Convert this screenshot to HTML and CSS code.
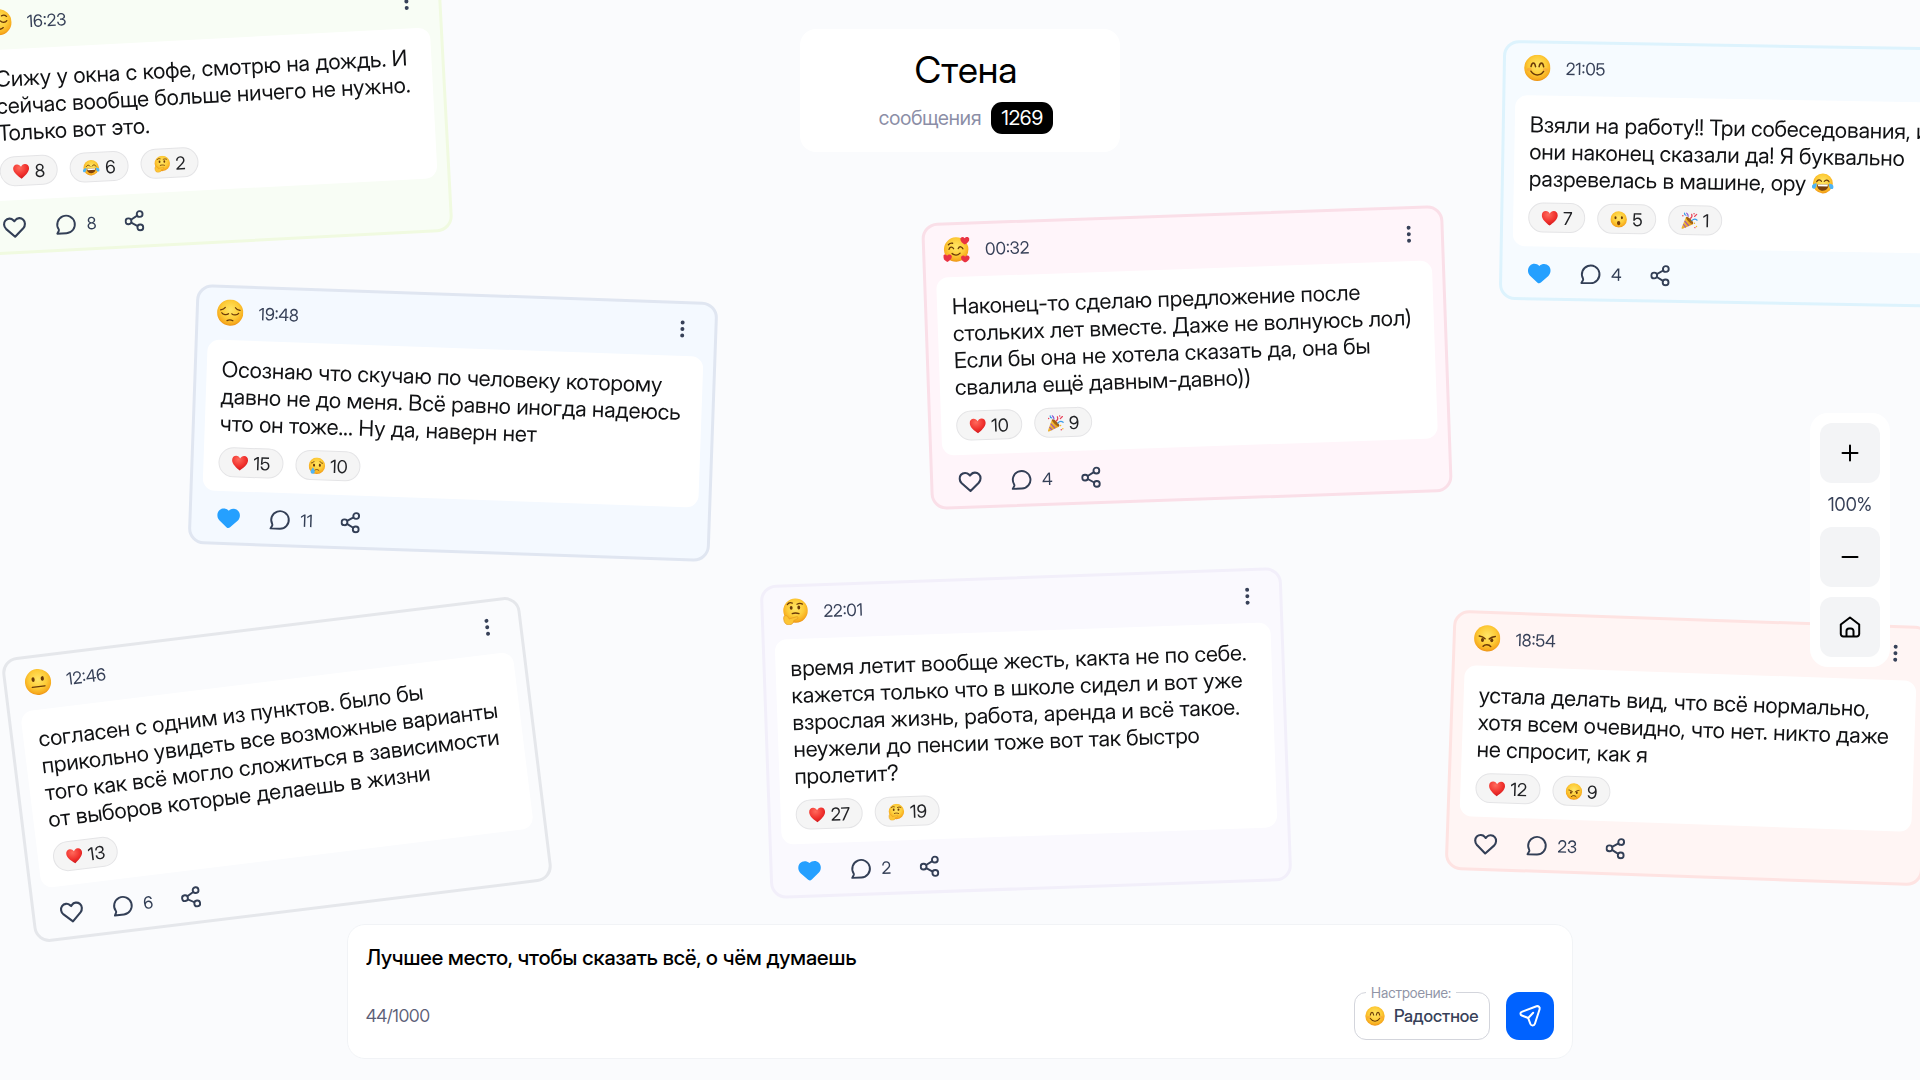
FILE: index.html
```html
<!DOCTYPE html>
<html lang="ru">
<head>
<meta charset="utf-8">
<meta name="viewport" content="width=device-width, initial-scale=1">
<title>Стена</title>
<link rel="stylesheet" href="styles.css">
</head>
<body>
<svg class="sprite" aria-hidden="true">
  <defs>
    <radialGradient id="g-face" cx="50%" cy="40%" r="62%">
      <stop offset="0" stop-color="#ffe566"/><stop offset=".55" stop-color="#fdcc38"/><stop offset=".85" stop-color="#f7ab1e"/><stop offset="1" stop-color="#e88a12"/>
    </radialGradient>
    <radialGradient id="g-heart" cx="40%" cy="25%" r="80%">
      <stop offset="0" stop-color="#ff6a5c"/><stop offset=".6" stop-color="#f0302c"/><stop offset="1" stop-color="#c8161c"/>
    </radialGradient>
    <linearGradient id="g-cone" x1="0" y1="0" x2="1" y2="1">
      <stop offset="0" stop-color="#ffd54a"/><stop offset="1" stop-color="#d98a16"/>
    </linearGradient>
  </defs>
  <symbol id="e-heart" viewBox="0 0 32 32">
    <path fill="url(#g-heart)" d="M16 30C10 25 1 18.500 1 10.500 1 5.500 4.500 2.500 8.500 2.500c3.300 0 6 1.800 7.500 5 1.500-3.200 4.200-5 7.500-5 4 0 7.500 3 7.500 8C31 18.500 22 25 16 30z"/>
  </symbol>
  <symbol id="e-smile" viewBox="0 0 32 32">
    <circle cx="16" cy="16" r="15.500" fill="url(#g-face)"/>
    <ellipse cx="6.500" cy="18" rx="3" ry="2" fill="#f58a3c" opacity=".4"/><ellipse cx="25.500" cy="18" rx="3" ry="2" fill="#f58a3c" opacity=".4"/>
    <g fill="none" stroke="#6b3a08" stroke-width="1.800" stroke-linecap="round"><path d="M8.500 14.500c.6-3 1.600-4.300 2.700-4.300s2.100 1.300 2.700 4.300M18.100 14.500c.6-3 1.600-4.300 2.700-4.300s2.100 1.300 2.700 4.300M8.500 20c2 3 4.500 4.300 7.500 4.300s5.500-1.300 7.500-4.300"/></g>
  </symbol>
  <symbol id="e-sad" viewBox="0 0 32 32">
    <circle cx="16" cy="16" r="15.500" fill="url(#g-face)"/>
    <g fill="none" stroke="#6b3a08" stroke-width="1.500" stroke-linecap="round"><path d="M6 16.500c1.500 2.300 6 2.800 8 .8M26 16.500c-1.500 2.300-6 2.800-8 .8M4.500 13c2-.3 4.500-1.500 5.500-3M27.500 13c-2-.3-4.500-1.500-5.500-3M12.500 25.500c2-1 5-1 7 0"/></g>
  </symbol>
  <symbol id="e-calm" viewBox="0 0 32 32">
    <circle cx="16" cy="16" r="15.500" fill="url(#g-face)"/>
    <g fill="none" stroke="#6b3a08" stroke-width="1.500" stroke-linecap="round"><path d="M6 14.500c1.500 2.300 6 2.300 7.500 0M18.500 14.500c1.500 2.300 6 2.300 7.500 0M6 9.500c1.500-1.500 4-2 6-1M20 8.500c2-1 4.500-.5 6 1M10.500 22.500c3 2.500 8 2.500 11 0"/></g>
  </symbol>
  <symbol id="e-neutral" viewBox="0 0 32 32">
    <circle cx="16" cy="16" r="15.500" fill="url(#g-face)"/>
    <ellipse cx="10.500" cy="12.500" rx="1.900" ry="2.800" fill="#6b3a08"/><ellipse cx="21.500" cy="12.500" rx="1.900" ry="2.800" fill="#6b3a08"/>
    <path d="M8.500 21.500h15" stroke="#6b3a08" stroke-width="1.600" stroke-linecap="round"/>
  </symbol>
  <symbol id="e-angry" viewBox="0 0 32 32">
    <circle cx="16" cy="16" r="15.500" fill="url(#g-face)"/>
    <ellipse cx="10.500" cy="18" rx="1.800" ry="2.300" fill="#6b3a08"/><ellipse cx="21.500" cy="18" rx="1.800" ry="2.300" fill="#6b3a08"/>
    <g fill="none" stroke="#6b3a08" stroke-width="1.800" stroke-linecap="round"><path d="M6.500 13.500c2 .2 5 1.200 7 3M25.500 13.500c-2 .2-5 1.200-7 3M11.500 25.500c2-2.600 7-2.600 9 0"/></g>
  </symbol>
  <symbol id="e-wow" viewBox="0 0 32 32">
    <circle cx="16" cy="16" r="15.500" fill="url(#g-face)"/>
    <ellipse cx="10" cy="13" rx="2" ry="2.800" fill="#6b3a08"/><ellipse cx="22" cy="13" rx="2" ry="2.800" fill="#6b3a08"/>
    <ellipse cx="16" cy="23" rx="3.200" ry="4" fill="#7a3f0a"/>
  </symbol>
  <symbol id="e-cry" viewBox="0 0 32 32">
    <circle cx="16" cy="16" r="15.500" fill="url(#g-face)"/>
    <ellipse cx="10.500" cy="15" rx="2" ry="2.800" fill="#6b3a08"/><ellipse cx="21.500" cy="15" rx="2" ry="2.800" fill="#6b3a08"/>
    <g fill="none" stroke="#6b3a08" stroke-width="1.500" stroke-linecap="round"><path d="M5.500 11c2-.2 4-1.300 5-3M26.500 11c-2-.2-4-1.300-5-3M12 24.500c2-2 6-2 8 0"/></g>
    <path fill="#4fb4f5" d="M8.500 19c2 3.500 4 6 4 8.500a4 4 0 0 1-8 0c0-2.500 2-5 4-8.500z"/>
  </symbol>
  <symbol id="e-joy" viewBox="0 0 32 32">
    <circle cx="16" cy="16" r="14.500" fill="url(#g-face)"/>
    <g fill="none" stroke="#6b3a08" stroke-width="1.700" stroke-linecap="round"><path d="M7 13.500c1.500-3 5-3.500 7-.5M25 13.500c-1.500-3-5-3.500-7-.5"/></g>
    <path fill="#7a3f0a" d="M7.500 17.500h17c0 5.500-3.500 9-8.500 9s-8.500-3.500-8.500-9z"/><path fill="#fff" d="M8.500 17.500h15l-.6 2.800H9.100z"/>
    <path fill="#4fb4f5" d="M7 16c-4 .5-6.500 2-6.800 4.500-.3 2.500 1.800 4 3.800 3.300C6.500 22.800 7 20 7 16zM25 16c4 .5 6.500 2 6.800 4.500.3 2.500-1.800 4-3.800 3.300C25.500 22.800 25 20 25 16z"/>
  </symbol>
  <symbol id="e-think" viewBox="0 0 32 32">
    <circle cx="16.500" cy="15" r="14.500" fill="url(#g-face)"/>
    <ellipse cx="11.500" cy="11.500" rx="1.700" ry="2.300" fill="#6b3a08"/><ellipse cx="20.500" cy="11.500" rx="1.700" ry="2.300" fill="#6b3a08"/>
    <g fill="none" stroke="#6b3a08" stroke-width="1.500" stroke-linecap="round"><path d="M7 7.500c1.500-2 4-2.500 6-1.500M18.500 7.500c2-1 4.500-1 6.500 0M12.500 18.500c2.500-1 5.500-.8 8 .3"/></g>
    <path fill="#fdc535" stroke="#e39a20" stroke-width=".8" stroke-linejoin="round" d="M4.500 20.500c-2 0-2.600 2-2.300 4.500.3 4 2.500 6.600 6 6.600 3.600 0 5.800-2.200 5.900-5 1.600-.6 3.600-1.400 4.500-2 1.200-1 .5-2.700-1.100-2.300L9.500 24.300c-.8.300-1.300-.2-1.700-1.200-.6-1.600-1.800-2.600-3.300-2.600z"/>
  </symbol>
  <symbol id="e-love" viewBox="0 0 32 32">
    <circle cx="15.500" cy="16" r="14.500" fill="url(#g-face)"/>
    <g fill="none" stroke="#6b3a08" stroke-width="1.600" stroke-linecap="round"><path d="M7 15.500c1-3 4-3.500 5.500-.5M18 15c1.500-3 4.500-2.500 5.500.5M10.500 20.500c2.500 2.800 7 2.800 9.500 0M6.500 10c1.500-1.500 3-2 5-1.500"/></g>
    <g fill="#e93343"><path d="M26 10.500c-3-1.800-5.500-4-5-7 .4-2.300 3.300-3 5-.6C27.600.7 31 1.300 31.500 3.600c.5 3-2.500 5.200-5.500 6.900zM4.500 30.500c-3-1.800-5.500-4-5-7 .4-2.300 3.300-3 5-.6 1.600-2.200 5-1.600 5.500.7.500 3-2.500 5.200-5.500 6.900zM25.500 32c-3-1.800-5-4-4.500-6.500.4-2.300 3.300-3 4.800-.6 1.600-2.200 4.700-1.600 5.200.7.500 2.500-2.500 4.700-5.500 6.400z"/></g>
  </symbol>
  <symbol id="e-party" viewBox="0 0 32 32">
    <path fill="url(#g-cone)" d="M9 9c5 1.500 11.500 8 13.500 13.500L3 31.500c-1.500.5-2.500-.5-2-2z"/>
    <path fill="none" stroke="#9b4fc0" stroke-width="2" d="M6.500 16.500l8 9.500M4 23l5 6"/>
    <ellipse cx="16" cy="15.500" rx="2.800" ry="9" transform="rotate(-45 16 15.500)" fill="#a3600f"/>
    <g fill="none" stroke-width="2.200" stroke-linecap="round"><path stroke="#e8425a" d="M17 12c3-2 4-5 2.500-8M25 8l4-4"/><path stroke="#3b9be8" d="M20 16c3-3 7-3.500 10-1M6 2c0 3 1 4 3 4"/><path stroke="#8a55d6" d="M13 8c0-3-1-4.500-3-6"/></g>
    <g fill="#f4b92a"><circle cx="25" cy="21" r="1.400"/><circle cx="29" cy="27" r="1.400"/></g><g fill="#e8425a"><circle cx="3" cy="7" r="1.400"/><circle cx="24" cy="3" r="1.400"/><circle cx="26" cy="29" r="1.400"/></g>
  </symbol>
  <symbol id="i-like" viewBox="0 0 26 24">
    <path fill="none" stroke="currentColor" stroke-width="2.300" stroke-linejoin="round" d="M13 22.300L3.700 13.500C1 10.700 1 6.500 3.200 4.200c2.400-2.500 6.500-2.500 8.700 0L13 5.400l1.100-1.200c2.200-2.500 6.300-2.500 8.700 0 2.200 2.300 2.200 6.500-.5 9.300z"/>
  </symbol>
  <symbol id="i-liked" viewBox="0 0 26 24">
    <path fill="#25a0ff" d="M11 21.800L3 14.500C0 11.500 0 6.500 2.700 3.700 5.500.8 10 .9 13 3.800 16 .9 20.500.8 23.300 3.700 26 6.500 26 11.500 23 14.500l-8 7.300c-1.400 1.200-2.600 1.200-4 0z"/>
  </symbol>
  <symbol id="i-comment" viewBox="0 0 24 24">
    <path fill="none" stroke="currentColor" stroke-width="2.100" stroke-linecap="round" stroke-linejoin="round" d="M2.500 21.500h10a9.600 9.600 0 1 0-8.300-4.800c.3.600.3 1 .1 1.600z"/>
  </symbol>
  <symbol id="i-share" viewBox="0 0 20 22">
    <g fill="none" stroke="currentColor" stroke-width="1.900"><circle cx="4" cy="11" r="2.900"/><circle cx="15.500" cy="4.300" r="2.900"/><circle cx="15.500" cy="17.700" r="2.900"/><path d="M6.600 9.500l6.300-3.700M6.600 12.500l6.300 3.700"/></g>
  </symbol>
  <symbol id="i-dots" viewBox="0 0 6 18">
    <g fill="currentColor"><circle cx="3" cy="2.500" r="2"/><circle cx="3" cy="9" r="2"/><circle cx="3" cy="15.500" r="2"/></g>
  </symbol>
</svg>

<main class="board">
  <article class="card card-calm">
    <header class="card-head"><svg class="mood-icon" role="img" aria-label="Спокойное"><use href="#e-calm"/></svg><time>16:23</time><button class="menu" aria-label="Меню"><svg><use href="#i-dots"/></svg></button></header>
    <div class="card-body">
      <p>Сижу у окна с кофе, смотрю на дождь. И сейчас вообще больше ничего не нужно. Только вот это.</p>
      <div class="reactions"><button><svg><use href="#e-heart"/></svg>8</button><button><svg><use href="#e-joy"/></svg>6</button><button><svg><use href="#e-think"/></svg>2</button></div>
    </div>
    <footer class="card-foot"><button class="act like" aria-label="Нравится"><svg><use href="#i-like"/></svg></button><button class="act comment"><svg><use href="#i-comment"/></svg>8</button><button class="act share" aria-label="Поделиться"><svg><use href="#i-share"/></svg></button></footer>
  </article>

  <article class="card card-pensive">
    <header class="card-head"><svg class="mood-icon" role="img" aria-label="Грустное"><use href="#e-sad"/></svg><time>19:48</time><button class="menu" aria-label="Меню"><svg><use href="#i-dots"/></svg></button></header>
    <div class="card-body">
      <p>Осознаю что скучаю по человеку которому давно не до меня. Всё равно иногда надеюсь что он тоже... Ну да, наверн нет</p>
      <div class="reactions"><button><svg><use href="#e-heart"/></svg>15</button><button><svg><use href="#e-cry"/></svg>10</button></div>
    </div>
    <footer class="card-foot"><button class="act like" aria-label="Нравится"><svg><use href="#i-liked"/></svg></button><button class="act comment"><svg><use href="#i-comment"/></svg>11</button><button class="act share" aria-label="Поделиться"><svg><use href="#i-share"/></svg></button></footer>
  </article>

  <article class="card card-love">
    <header class="card-head"><svg class="mood-icon" role="img" aria-label="Влюблённое"><use href="#e-love"/></svg><time>00:32</time><button class="menu" aria-label="Меню"><svg><use href="#i-dots"/></svg></button></header>
    <div class="card-body">
      <p>Наконец-то сделаю предложение после стольких лет вместе. Даже не волнуюсь лол) Если бы она не хотела сказать да, она бы свалила ещё давным-давно))</p>
      <div class="reactions"><button><svg><use href="#e-heart"/></svg>10</button><button><svg><use href="#e-party"/></svg>9</button></div>
    </div>
    <footer class="card-foot"><button class="act like" aria-label="Нравится"><svg><use href="#i-like"/></svg></button><button class="act comment"><svg><use href="#i-comment"/></svg>4</button><button class="act share" aria-label="Поделиться"><svg><use href="#i-share"/></svg></button></footer>
  </article>

  <article class="card card-happy">
    <header class="card-head"><svg class="mood-icon" role="img" aria-label="Радостное"><use href="#e-smile"/></svg><time>21:05</time><button class="menu" aria-label="Меню"><svg><use href="#i-dots"/></svg></button></header>
    <div class="card-body">
      <p>Взяли на работу!! Три собеседования, и они наконец сказали да! Я буквально разревелась в машине, ору <svg class="inline-emoji" role="img" aria-label="смех до слёз"><use href="#e-joy"/></svg></p>
      <div class="reactions"><button><svg><use href="#e-heart"/></svg>7</button><button><svg><use href="#e-wow"/></svg>5</button><button><svg><use href="#e-party"/></svg>1</button></div>
    </div>
    <footer class="card-foot"><button class="act like" aria-label="Нравится"><svg><use href="#i-liked"/></svg></button><button class="act comment"><svg><use href="#i-comment"/></svg>4</button><button class="act share" aria-label="Поделиться"><svg><use href="#i-share"/></svg></button></footer>
  </article>

  <article class="card card-neutral">
    <header class="card-head"><svg class="mood-icon" role="img" aria-label="Нейтральное"><use href="#e-neutral"/></svg><time>12:46</time><button class="menu" aria-label="Меню"><svg><use href="#i-dots"/></svg></button></header>
    <div class="card-body">
      <p>согласен с одним из пунктов. было бы прикольно увидеть все возможные варианты того как всё могло сложиться в зависимости от выборов которые делаешь в жизни</p>
      <div class="reactions"><button><svg><use href="#e-heart"/></svg>13</button></div>
    </div>
    <footer class="card-foot"><button class="act like" aria-label="Нравится"><svg><use href="#i-like"/></svg></button><button class="act comment"><svg><use href="#i-comment"/></svg>6</button><button class="act share" aria-label="Поделиться"><svg><use href="#i-share"/></svg></button></footer>
  </article>

  <article class="card card-think">
    <header class="card-head"><svg class="mood-icon" role="img" aria-label="Задумчивое"><use href="#e-think"/></svg><time>22:01</time><button class="menu" aria-label="Меню"><svg><use href="#i-dots"/></svg></button></header>
    <div class="card-body">
      <p>время летит вообще жесть, какта не по себе. кажется только что в школе сидел и вот уже взрослая жизнь, работа, аренда и всё такое. неужели до пенсии тоже вот так быстро пролетит?</p>
      <div class="reactions"><button><svg><use href="#e-heart"/></svg>27</button><button><svg><use href="#e-think"/></svg>19</button></div>
    </div>
    <footer class="card-foot"><button class="act like" aria-label="Нравится"><svg><use href="#i-liked"/></svg></button><button class="act comment"><svg><use href="#i-comment"/></svg>2</button><button class="act share" aria-label="Поделиться"><svg><use href="#i-share"/></svg></button></footer>
  </article>

  <article class="card card-angry">
    <header class="card-head"><svg class="mood-icon" role="img" aria-label="Злое"><use href="#e-angry"/></svg><time>18:54</time><button class="menu" aria-label="Меню"><svg><use href="#i-dots"/></svg></button></header>
    <div class="card-body">
      <p>устала делать вид, что всё нормально, хотя всем очевидно, что нет. никто даже не спросит, как я</p>
      <div class="reactions"><button><svg><use href="#e-heart"/></svg>12</button><button><svg><use href="#e-angry"/></svg>9</button></div>
    </div>
    <footer class="card-foot"><button class="act like" aria-label="Нравится"><svg><use href="#i-like"/></svg></button><button class="act comment"><svg><use href="#i-comment"/></svg>23</button><button class="act share" aria-label="Поделиться"><svg><use href="#i-share"/></svg></button></footer>
  </article>
</main>

<header class="wall-title">
  <h1>Стена</h1>
  <p>сообщения <strong>1269</strong></p>
</header>

<aside class="zoom" aria-label="Масштаб">
  <button aria-label="Увеличить"><svg viewBox="0 0 24 24"><path d="M12 4.500v15M4.500 12h15"/></svg></button>
  <output>100%</output>
  <button aria-label="Уменьшить"><svg viewBox="0 0 24 24"><path d="M4.500 12h15"/></svg></button>
  <button class="home" aria-label="К центру"><svg viewBox="0 0 24 24"><path d="M2.800 9.500L12 2.500l9.200 7V19a2.500 2.500 0 0 1-2.500 2.500H5.300A2.500 2.500 0 0 1 2.800 19zM8.500 21.500V16a2.500 2.500 0 0 1 2.500-2.500h2a2.500 2.500 0 0 1 2.500 2.500v5.500"/></svg></button>
</aside>

<form class="composer">
  <textarea aria-label="Сообщение" rows="1">Лучшее место, чтобы сказать всё, о чём думаешь</textarea>
  <div class="composer-bar">
    <span class="counter">44/1000</span>
    <div class="mood">
      <label for="mood">Настроение:</label>
      <svg aria-hidden="true"><use href="#e-smile"/></svg>
      <select id="mood"><option>Радостное</option></select>
    </div>
    <button class="send" type="button" aria-label="Отправить"><svg viewBox="0 0 24 24"><path d="M3.700 7.900l14.800-5.600c1.900-.7 3.700 1 3.100 2.900l-4.700 14.600c-.7 2.200-3.700 2.300-4.500.2l-2-5.400-.8-.8-5.800-2.300c-1.700-.7-1.800-3-.1-3.600zM10 14.200l5.200-5.400"/></svg></button>
  </div>
</form>
</body>
</html>
```
FILE: styles.css
```css
* { box-sizing: border-box; }

body {
  margin: 0;
  min-height: 100vh;
  overflow: hidden;
  background: #fafbfd;
  color: #111214;
  font-family: "Inter Display", Inter, "Liberation Sans", sans-serif;
  font-variation-settings: "opsz" 32;
  font-size: 16px;
}

button, select, textarea {
  font: inherit;
  font-variation-settings: inherit;
  color: inherit;
  background: none;
  border: 0;
  padding: 0;
  margin: 0;
}

h1, p { margin: 0; }

.sprite { position: absolute; width: 0; height: 0; }

/* Free canvas: notes are pinned relative to its centre */
.board { position: fixed; inset: 0; overflow: hidden; }

.card {
  position: absolute;
  width: 522px;
  padding: 0 10px;
  border: 3px solid;
  border-radius: 16px;
}

.card-calm { left: calc(50% - 991px); top: calc(50% - 556px); width: 478px; transform: rotate(-3deg); background: #f8fdf5; border-color: #f0fae0; }
.card-pensive { left: calc(50% - 768px); top: calc(50% - 247px); transform: rotate(2deg); background: #f4f9ff; border-color: #e0e6f1; }
.card-love { left: calc(50% - 34px); top: calc(50% - 326px); transform: rotate(-2deg); background: #fff5fa; border-color: #fadfe8; }
.card-happy { left: calc(50% + 541px); top: calc(50% - 496px); width: 478px; transform: rotate(1deg); background: #f6fbff; border-color: #ddf3fd; }
.card-neutral { left: calc(50% - 944px); top: calc(50% + 86px); transform: rotate(-7deg); background: #fafbfd; border-color: #e5e7eb; }
.card-think { left: calc(50% - 195px); top: calc(50% + 36px); transform: rotate(-2deg); background: #faf9fe; border-color: #f2effa; }
.card-angry { left: calc(50% + 489px); top: calc(50% + 78px); width: 478px; transform: rotate(2deg); background: #fff5f4; border-color: #fee3e2; }

.card-head {
  display: flex;
  align-items: center;
  gap: 15px;
  height: 52px;
  padding: 0 19px 3px 8px;
  color: #374158;
}
.card-head time { font-size: 17px; }
.mood-icon { width: 27px; height: 27px; }
.menu { display: flex; margin-left: auto; }
.menu svg { width: 6px; height: 18px; }

.card-body {
  padding: 16px 13px 14px 15px;
  border-radius: 12px;
  background: #fff;
}
.card-body p { font-size: 22px; line-height: 27px; }
.inline-emoji { width: 22px; height: 22px; vertical-align: -3px; }

.reactions { display: flex; gap: 12px; margin-top: 10px; }
.reactions button {
  display: flex;
  align-items: center;
  gap: 5px;
  height: 30px;
  padding: 0 12px;
  border: 1px solid #e4e4e6;
  border-radius: 15px;
  background: #f5f5f5;
  color: #222326;
  font-size: 18px;
  font-variation-settings: "opsz" 20;
}
.reactions svg { width: 17px; height: 17px; }

.card-foot {
  display: flex;
  align-items: center;
  height: 51px;
  padding: 3px 0 0 15px;
  color: #333f56;
  font-size: 17px;
  font-variation-settings: "opsz" 20;
}
.act { display: flex; align-items: center; gap: 10px; }
.like svg { width: 24px; height: 22px; }
.comment { margin-left: 28px; }
.comment svg { width: 22px; height: 22px; }
.share { margin-left: 28px; }
.share svg { width: 20px; height: 22px; }

.wall-title {
  position: fixed;
  top: 29px;
  left: 50%;
  width: 320px;
  transform: translateX(-50%);
  padding: 19px 0 18px 12px;
  border-radius: 16px;
  background: #fff;
  text-align: center;
}
.wall-title h1 { font-size: 37px; font-weight: 400; line-height: 44px; color: #000; }
.wall-title p {
  display: flex;
  justify-content: center;
  align-items: center;
  gap: 10px;
  margin-top: 10px;
  color: #8b8ea6;
  font-size: 20px;
}
.wall-title strong {
  padding: 0 10px;
  border-radius: 11px;
  background: #000;
  color: #fff;
  font-weight: 400;
  font-variation-settings: "opsz" 24;
  line-height: 32px;
}

.zoom {
  position: fixed;
  top: 50%;
  right: 30px;
  transform: translateY(-50%);
  display: flex;
  flex-direction: column;
  width: 80px;
  padding: 10px;
  border-radius: 18px;
  background: #fff;
}
.zoom button {
  display: flex;
  align-items: center;
  justify-content: center;
  height: 60px;
  border-radius: 12px;
  background: #f3f4f6;
}
.zoom .home { margin-top: 10px; }
.zoom output { color: #374158; font-size: 18px; line-height: 44px; text-align: center; }
.zoom svg {
  width: 24px;
  height: 24px;
  fill: none;
  stroke: #000;
  stroke-width: 2;
  stroke-linecap: round;
  stroke-linejoin: round;
}

.composer {
  position: fixed;
  left: 50%;
  bottom: 21px;
  width: min(1226px, 100% - 40px);
  transform: translateX(-50%);
  padding: 19px 18px 18px;
  border: 1px solid #f1f3f6;
  border-radius: 18px;
  background: #fff;
}
.composer textarea {
  display: block;
  width: 100%;
  height: 28px;
  resize: none;
  outline: 0;
  overflow: hidden;
  color: #000;
  font-size: 21px;
  font-weight: 500;
  line-height: 28px;
}
.composer-bar { display: flex; align-items: center; margin-top: 20px; }
.counter { margin-right: auto; color: #5c6077; font-size: 17px; }
.mood {
  position: relative;
  display: flex;
  align-items: center;
  gap: 9px;
  height: 48px;
  padding: 0 10px;
  border: 1px solid #d3d5dc;
  border-radius: 12px;
  color: #374158;
}
.mood label {
  position: absolute;
  top: -9px;
  left: 11px;
  padding: 0 5px;
  background: #fff;
  color: #9094a6;
  font-size: 14px;
  font-variation-settings: "opsz" 24;
  line-height: 18px;
}
.mood svg { width: 20px; height: 20px; }
.mood select { appearance: none; font-size: 17px; font-weight: 500; outline: 0; }
.send {
  display: flex;
  align-items: center;
  justify-content: center;
  width: 48px;
  height: 48px;
  margin-left: 16px;
  border-radius: 13px;
  background: #0062ff;
}
.send svg {
  width: 24px;
  height: 24px;
  fill: none;
  stroke: #fff;
  stroke-width: 2;
  stroke-linecap: round;
  stroke-linejoin: round;
}
```
